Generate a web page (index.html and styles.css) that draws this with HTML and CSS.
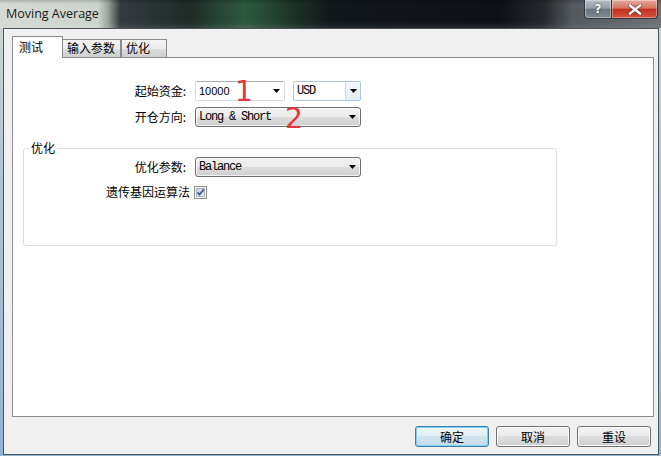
FILE: index.html
```html
<!DOCTYPE html>
<html lang="zh-CN">
<head>
<meta charset="utf-8">
<title>Moving Average</title>
<link rel="stylesheet" href="styles.css">
</head>
<body>
<div class="window">
  <div class="titlebar">
    <span class="title">Moving Average</span>
    <div class="caption-btns">
      <div class="cap help">?</div>
      <div class="cap close">
        <svg width="14" height="11" viewBox="0 0 14 11"><path d="M2 1.5 L12 9.5 M12 1.5 L2 9.5" stroke="#2a1410" stroke-width="4" stroke-linecap="square" opacity="0.55"/><path d="M2 1.5 L12 9.5 M12 1.5 L2 9.5" stroke="#fff" stroke-width="2.4" stroke-linecap="square"/></svg>
      </div>
    </div>
  </div>
  <div class="client">
    <div class="tabs">
      <div class="tab active">测试</div>
      <div class="tab first-inactive">输入参数</div>
      <div class="tab">优化</div>
    </div>
    <div class="panel">
      <div class="form-grid">
        <label class="lbl">起始资金:</label>
        <div class="pair">
          <div class="combo edit w90"><span class="val sans">10000</span><svg class="arrow" width="7" height="4" viewBox="0 0 7 4"><polygon points="0,0 7,0 3.5,4" fill="#000"/></svg></div>
          <div class="combo edit usd w68"><span class="val mono">USD</span><span class="dd"><svg width="7" height="4" viewBox="0 0 7 4"><polygon points="0,0 7,0 3.5,4" fill="#000"/></svg></span></div>
        </div>
        <label class="lbl">开仓方向:</label>
        <div class="combo btn"><span class="val mono">Long &amp; Short</span><svg class="arrow" width="7" height="4" viewBox="0 0 7 4"><polygon points="0,0 7,0 3.5,4" fill="#000"/></svg></div>
      </div>
      <fieldset class="group">
        <legend>优化</legend>
        <div class="group-grid">
          <label class="lbl">优化参数:</label>
          <div class="combo btn"><span class="val mono">Balance</span><svg class="arrow" width="7" height="4" viewBox="0 0 7 4"><polygon points="0,0 7,0 3.5,4" fill="#000"/></svg></div>
          <div class="check-row">
            <span>遗传基因运算法</span>
            <svg class="checkbox" width="13" height="13" viewBox="0 0 13 13">
              <defs><linearGradient id="cb" x1="0" y1="0" x2="1" y2="1"><stop offset="0" stop-color="#c9ced6"/><stop offset="1" stop-color="#f4f5f7"/></linearGradient></defs>
              <rect x="0.5" y="0.5" width="12" height="12" fill="#f4f4f4" stroke="#8e8f8f"/>
              <rect x="2.5" y="2.5" width="8" height="8" fill="url(#cb)" stroke="#aeb3b9"/>
              <path d="M3.4 6.3 L5.5 8.6 L9.8 3.4" fill="none" stroke="#3c5a9c" stroke-width="1.7"/>
            </svg>
          </div>
        </div>
      </fieldset>
      <span class="note n1">1</span>
      <span class="note n2">2</span>
    </div>
    <div class="footer">
      <button class="pbtn default">确定</button>
      <button class="pbtn">取消</button>
      <button class="pbtn">重设</button>
    </div>
  </div>
</div>
</body>
</html>
```

FILE: styles.css
```css
* { box-sizing: border-box; }
html, body { margin: 0; padding: 0; }
body {
  width: 661px;
  height: 456px;
  overflow: hidden;
  background: #fff;
  font-family: "Noto Sans CJK SC", "Noto Sans", sans-serif;
  font-size: 12px;
  color: #000;
}
.window {
  width: 661px;
  height: 456px;
  display: flex;
  flex-direction: column;
  background: linear-gradient(to bottom, #cfd7cf 0, #b3c5d6 35%, #93b3d3 100%);
}
.titlebar {
  height: 28px;
  flex: none;
  display: flex;
  justify-content: space-between;
  align-items: flex-start;
  background:
    linear-gradient(to bottom, rgba(0,0,0,0.18) 0, rgba(0,0,0,0) 4px, rgba(255,255,255,0) 22px, rgba(255,255,255,0.08) 28px),
    linear-gradient(to right, #d5dbd4 0, #cdd4cd 98px, #9aa29c 108px, #343b40 120px, #1f2b27 190px, #2e5a3f 245px, #1e3327 292px, #12171c 330px, #0e1217 500px, #262a2e 545px, #54595d 572px, #6c7175 661px);
}
.title {
  font-family: "Open Sans", "Liberation Sans", sans-serif;
  font-size: 12.5px;
  line-height: 16px;
  margin: 6px 0 0 6px;
  color: #1b1b1b;
}
.caption-btns {
  display: flex;
  margin-right: 3px;
}
.cap {
  height: 19px;
  display: flex;
  align-items: center;
  justify-content: center;
  border: 1px solid #33383d;
  border-top: none;
  box-shadow: inset 0 0 0 1px rgba(255,255,255,0.35);
}
.help {
  width: 28px;
  border-bottom-left-radius: 4px;
  background: linear-gradient(to bottom, #b6bdc3 0, #979fa6 45%, #6e777f 52%, #7f8a93 100%);
  color: #fff;
  font-family: "DejaVu Sans", sans-serif;
  font-weight: bold;
  font-size: 12px;
  text-shadow: 0 0 2px #222;
}
.close {
  width: 46px;
  border-left: none;
  border-bottom-right-radius: 4px;
  background: linear-gradient(to bottom, #e6ab9e 0, #d6735f 45%, #c0321e 52%, #d05440 100%);
}
.client {
  flex: 1;
  display: flex;
  flex-direction: column;
  margin: 0 2px 1px 3px;
  border: 1px solid #4a545e;
  background: #f0f0f0;
  padding: 7px 4px 7px 8px;
}
.tabs {
  display: flex;
  align-items: flex-start;
  height: 21px;
  flex: none;
  position: relative;
  z-index: 1;
}
.tab {
  height: 18px;
  margin-top: 3px;
  padding-left: 4px;
  line-height: 16px;
  border: 1px solid #898c95;
  border-bottom: none;
  background: linear-gradient(to bottom, #f3f3f3 0, #ebebeb 50%, #dddddd 50%, #cfcfcf 100%);
  width: 46px;
  white-space: nowrap;
}
.tab.active {
  width: 51px;
  height: 22px;
  margin-top: 0;
  padding-left: 6px;
  line-height: 19px;
  background: #fff;
  position: relative;
  z-index: 2;
}
.tab.first-inactive {
  width: 59px;
  margin-left: -1px;
}
.panel {
  position: relative;
  height: 360px;
  flex: none;
  background: #fff;
  border: 1px solid #898c95;
  padding-top: 23px;
}
.form-grid {
  display: grid;
  grid-template-columns: 173px 166px;
  column-gap: 9px;
  row-gap: 6px;
  grid-auto-rows: 20px;
}
.lbl {
  text-align: right;
  line-height: 20px;
  white-space: nowrap;
}
.pair {
  display: flex;
  gap: 8px;
}
.combo {
  height: 20px;
  display: flex;
  align-items: center;
  padding-left: 3px;
  white-space: nowrap;
}
.combo .arrow { margin-left: auto; margin-right: 4px; }
.w90 { width: 90px; }
.w68 { width: 68px; }
.edit {
  background: #fff;
  border: 1px solid #d5d9df;
  border-top-color: #abadb3;
  border-radius: 2px;
}
.usd {
  border-color: #a9c7e4;
  padding-right: 0;
}
.usd .dd {
  margin-left: auto;
  width: 15px;
  height: 18px;
  display: flex;
  align-items: center;
  justify-content: center;
  border-left: 1px solid #c5d9ec;
  background: linear-gradient(to bottom, #f4f8fc, #e4edf6);
}
.btn {
  border: 1px solid #707070;
  border-radius: 3px;
  background: linear-gradient(to bottom, #f2f2f2 0, #ebebeb 50%, #dddddd 50%, #cfcfcf 100%);
  box-shadow: inset 0 0 0 1px rgba(255,255,255,0.7);
}
.val.mono {
  font-family: "Liberation Mono", "Courier New", monospace;
  font-size: 12px;
  letter-spacing: -1.2px;
  color: #000;
}
.val.sans {
  font-family: "Liberation Sans", sans-serif;
  font-size: 11px;
}
.group {
  margin: 12px 0 0 10px;
  width: 534px;
  border: 1px solid #d5dfe5;
  border-radius: 3px;
  padding: 0 0 46px 5px;
  min-inline-size: 0;
}
.group legend {
  padding: 0 2px;
  line-height: 18px;
  font-size: 12px;
}
.group-grid {
  display: grid;
  grid-template-columns: 157px 166px;
  column-gap: 9px;
  grid-template-rows: 20px 14px;
  row-gap: 8px;
}
.check-row {
  grid-column: 1 / -1;
  display: flex;
  align-items: center;
  gap: 4px;
  padding-left: 77px;
  line-height: 14px;
}
.checkbox { flex: none; }
.note {
  position: absolute;
  font-family: "DejaVu Sans", sans-serif;
  font-size: 28px;
  line-height: 28px;
  color: #e4353a;
}
.n1 { left: 222px; top: 20px; }
.n2 { left: 272px; top: 47px; }
.footer {
  display: flex;
  justify-content: flex-end;
  gap: 7px;
  margin-top: 9px;
  padding-right: 3px;
}
.pbtn {
  width: 74px;
  height: 21px;
  padding: 0;
  font-family: "Noto Sans CJK SC", sans-serif;
  font-size: 12px;
  line-height: 18px;
  color: #000;
  border: 1px solid #707070;
  border-radius: 3px;
  background: linear-gradient(to bottom, #f2f2f2 0, #ebebeb 50%, #dddddd 50%, #cfcfcf 100%);
  box-shadow: inset 0 0 0 1px #fbfbfb;
}
.pbtn.default {
  border-color: #3c7fb1;
  background: linear-gradient(to bottom, #eef5fa 0, #e2eef6 50%, #d2e4f0 50%, #c6dcea 100%);
  box-shadow: inset 0 0 0 1px #7fd0f4;
}
```
